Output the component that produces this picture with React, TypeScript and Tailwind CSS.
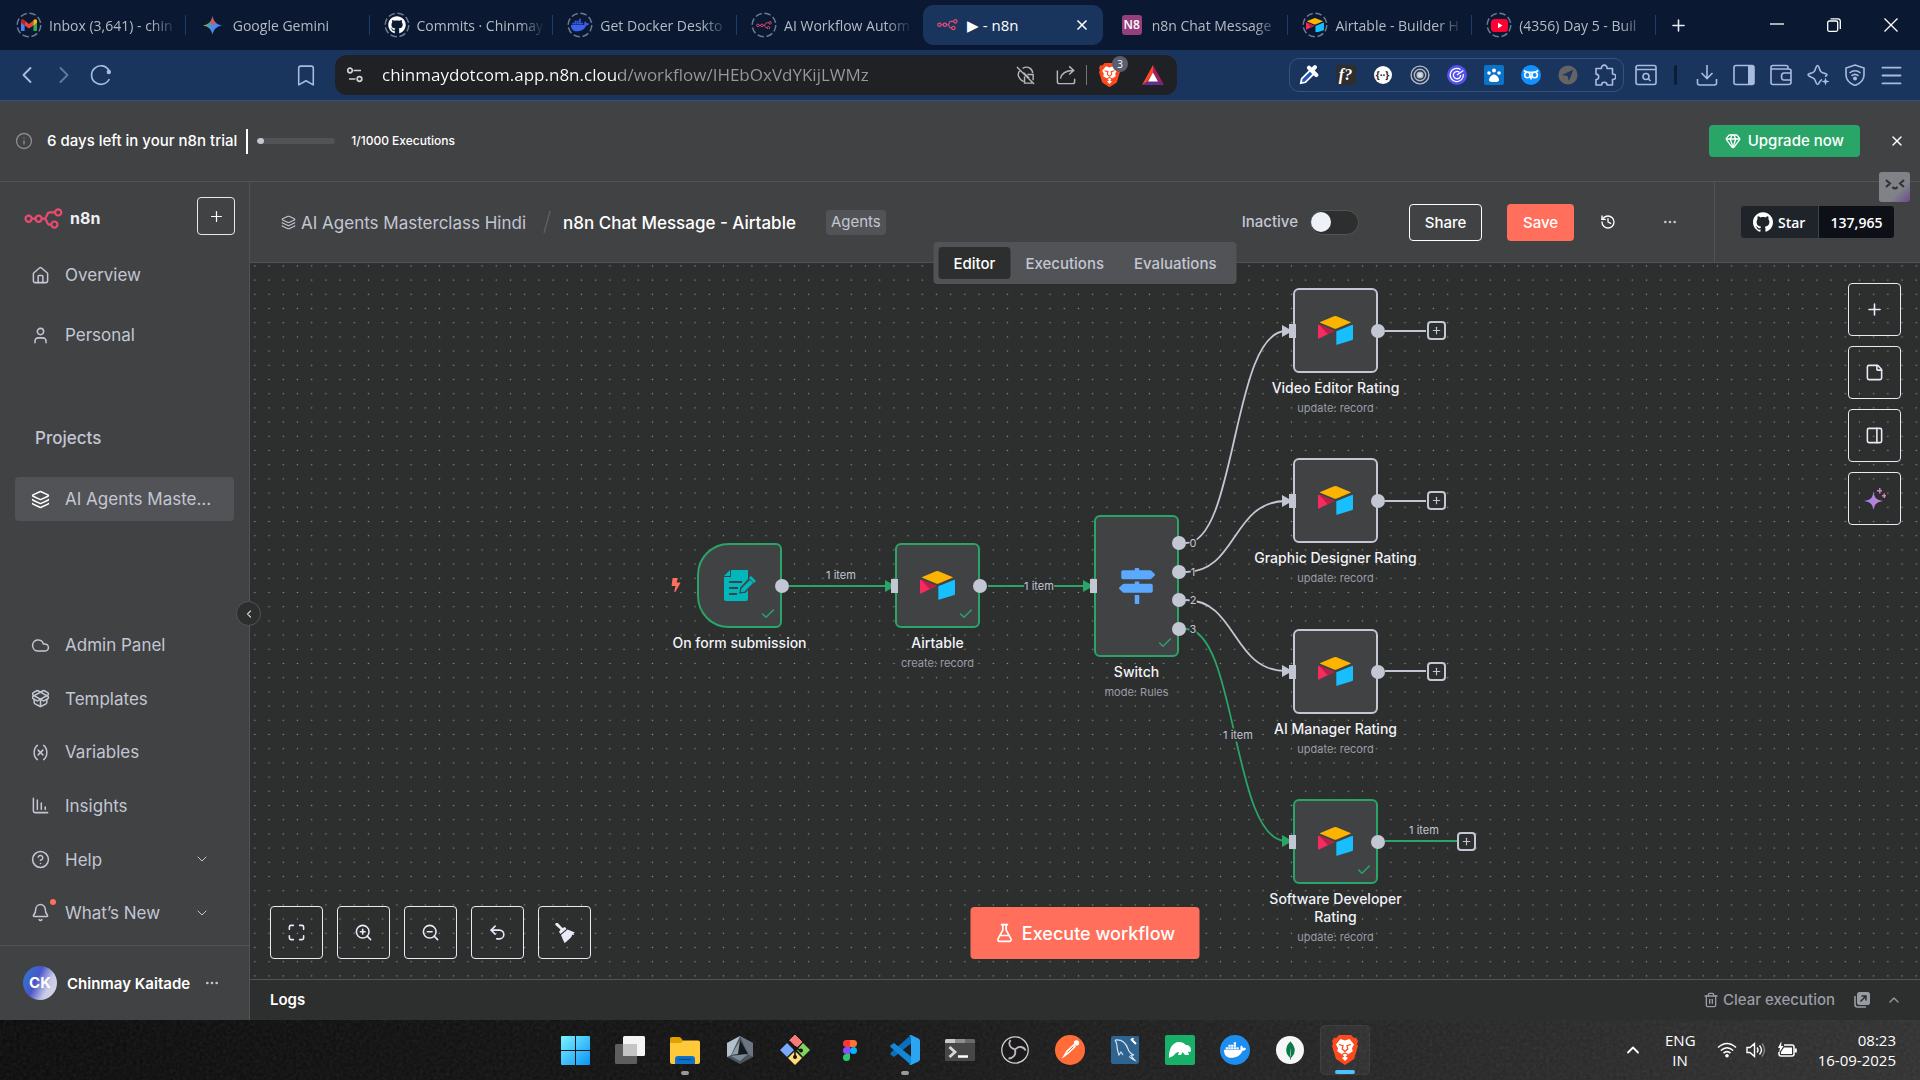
import type { ReactNode } from "react";
import {
  Bell,
  BookmarkIcon,
  ChartColumnDecreasing,
  Check,
  ChevronDown,
  ChevronLeft,
  ChevronRight,
  ChevronUp,
  CircleHelp,
  Cloud,
  Ellipsis,
  FlaskConical,
  Gem,
  History,
  House,
  Info,
  Layers,
  Maximize,
  Menu,
  PackageOpen,
  PanelRight,
  Plus,
  StickyNote,
  Trash2,
  Undo2,
  User,
  Variable,
  X,
  ZoomIn,
  ZoomOut,
} from "lucide-react";
import { FaBolt, FaDocker, FaGithub, FaMapSigns } from "react-icons/fa";
import { SiBrave, SiGithub, SiMongodb } from "react-icons/si";

const EDGE = "#c3c6d3";
const GREEN = "#29a568";

/* ---------- shared drawings ---------- */

function N8nLogo({ className }: { className: string }) {
  return (
    <svg viewBox="0 0 39 21" className={className} fill="none" stroke="#ea4b71" strokeWidth="2.2">
      <circle cx="4.6" cy="10.7" r="3.1" />
      <circle cx="14.6" cy="10.7" r="3.1" />
      <circle cx="34.2" cy="4.4" r="3.1" />
      <circle cx="30.4" cy="16.6" r="3.1" />
      <path d="M7.7 10.7h3.8M17.7 10.7h2.4c3 0 2-6.3 5.6-6.3h5.4M19.8 10.7c4 0 2 5.9 5.6 5.9h2" />
    </svg>
  );
}

function AirtableLogo({ className }: { className: string }) {
  return (
    <svg viewBox="0 0 107 88" className={className}>
      <path d="M7 18 49 1q4-1.500 8 0l42 17q2 1.500 0 3L57 38q-4 2-8 0L7 21q-2-1.500 0-3z" fill="#fcb400" />
      <path d="M56 47 105 27q2 0 2 2v41q0 2-2 3L58 88q-2 0-2-2z" fill="#18bfff" />
      <path d="M0 28q1-2 3-1l45 18q2 1 0 2L3 69q-3 1-3-1z" fill="#f82b60" />
      <path d="M3 27 48 45q2 1 0 2L30 56Z" fill="#ba1e45" />
    </svg>
  );
}

function WindowsLogo() {
  return (
    <svg viewBox="0 0 29 29" className="size-[29px]">
      <defs>
        <linearGradient id="win" x1="0" y1="0" x2="1" y2="1" gradientUnits="objectBoundingBox">
          <stop offset="0" stopColor="#7df3ff" />
          <stop offset="1" stopColor="#0a93f8" />
        </linearGradient>
      </defs>
      <path d="M0 1q0-1 1-1h13v14H0zM15 0h13q1 0 1 1v13H15zM0 15h14v14H1q-1 0-1-1zM15 15h14v13q0 1-1 1H15z" fill="url(#win)" />
    </svg>
  );
}

/* ---------- browser ---------- */

function Ring({ children }: { children: ReactNode }) {
  return (
    <span className="relative flex size-[26px] items-center justify-center">
      <svg viewBox="0 0 26 26" className="absolute inset-0 size-[26px]" fill="none" stroke="#6c7a90" strokeWidth="1.500">
        <circle cx="13" cy="13" r="11.800" strokeDasharray="6.600 2.670" />
      </svg>
      {children}
    </span>
  );
}

const tabs: { title: string; icon: ReactNode; active?: boolean }[] = [
  {
    title: "Inbox (3,641) - chin",
    icon: (
      <Ring>
        <svg viewBox="0 0 20 16" className="w-4">
          <path d="M0 2.500V14a1.500 1.500 0 0 0 1.500 1.500H4.500V6z" fill="#4285f4" />
          <path d="M20 2.500V14a1.500 1.500 0 0 1-1.500 1.500H15.500V6z" fill="#34a853" />
          <path d="M4.500 8V2l5.500 4.200L15.500 2v6L10 12z" fill="#ea4335" />
          <path d="M0 2.500C0 .4 2-.3 3.600.9L4.500 1.600V8L0 4.500z" fill="#c5221f" />
          <path d="M20 2.500C20 .4 18-.3 16.400.9l-.9.7V8L20 4.500z" fill="#fbbc04" />
        </svg>
      </Ring>
    ),
  },
  {
    title: "Google Gemini",
    icon: (
      <svg viewBox="0 0 20 20" className="size-[19px]">
        <defs>
          <linearGradient id="gem" x1="0" y1=".3" x2="1" y2=".6">
            <stop offset="0" stopColor="#fcbd00" />
            <stop offset=".3" stopColor="#50a877" />
            <stop offset=".5" stopColor="#4a8df8" />
            <stop offset="1" stopColor="#3b82f6" />
          </linearGradient>
        </defs>
        <path d="M10 0c.8 5.600 4.400 9.200 10 10-5.600.8-9.200 4.400-10 10-.8-5.600-4.400-9.200-10-10C5.600 9.200 9.200 5.600 10 0z" fill="url(#gem)" />
        <path d="M10 0c.5 3.500 2 6 4 7.600L10 10 7.500 6C9 4.600 9.700 2.500 10 0z" fill="#ef4a4a" opacity=".85" />
      </svg>
    ),
  },
  { title: "Commits · Chinmay", icon: <Ring><span className="flex size-[18px] rounded-full bg-[#0b1a33]"><FaGithub className="size-[18px] text-white" /></span></Ring> },
  { title: "Get Docker Deskto", icon: <Ring><FaDocker className="size-[18px] text-[#3a62ee]" /></Ring> },
  { title: "AI Workflow Autom", icon: <Ring><N8nLogo className="w-4" /></Ring> },
  { title: "▶ - n8n", icon: <N8nLogo className="w-[21px]" />, active: true },
  { title: "n8n Chat Message", icon: <span className="flex size-5 items-center justify-center rounded-[3px] bg-[#953f7c] text-[12px] font-semibold text-white">N8</span> },
  { title: "Airtable - Builder H", icon: <Ring><AirtableLogo className="w-[18px]" /></Ring> },
  {
    title: "(4356) Day 5 - Buil",
    icon: (
      <Ring>
        <svg viewBox="0 0 17 13" className="w-[17px]">
          <rect width="17" height="13" rx="3.500" fill="#ff0033" />
          <path d="M7 3.700v5.600l4.500-2.800z" fill="#fff" />
        </svg>
      </Ring>
    ),
  },
];

function TabStrip() {
  return (
    <div className="flex h-[50px] items-center bg-[#0a1931] pl-0.5">
      <div role="tablist" className="grid min-w-0 flex-1 grid-cols-9">
        {tabs.map((t, i) => (
          <div key={t.title} className="relative flex h-10 items-center">
            <button
              role="tab"
              aria-selected={!!t.active}
              className={
                t.active
                  ? "mx-0.5 flex h-10 w-full items-center rounded-[10px] bg-[#1a355d] pl-3 text-white"
                  : "flex h-10 w-full items-center pl-3.5 text-[#b4bac6]"
              }
            >
              <span className="flex w-[26px] shrink-0 justify-center">{t.icon}</span>
              <span
                className={
                  t.active
                    ? "ml-1.5 text-[15px] whitespace-nowrap"
                    : "ml-[7px] w-[128px] overflow-hidden [mask-image:linear-gradient(90deg,#000_80%,transparent)] text-left text-[14px] whitespace-nowrap"
                }
              >
                {t.title}
              </span>
              {t.active && <X className="mr-[13px] ml-auto size-4" strokeWidth={2.5} />}
            </button>
            {!t.active && i !== 4 && <span className="absolute top-2.5 right-0 h-5 w-px bg-[#1f3c68]" />}
          </div>
        ))}
      </div>
      <div className="flex w-[264px] items-center text-[#e8ebf0]">
        <button aria-label="New tab" className="ml-[13px]"><Plus className="size-[19px]" strokeWidth={2} /></button>
        <div className="ml-auto flex w-[150px] justify-between pr-[22px]">
          <button aria-label="Minimize"><svg viewBox="0 0 14 14" className="w-3.5"><path d="M0 6h14" stroke="#fff" strokeWidth="1.300" /></svg></button>
          <button aria-label="Restore">
            <svg viewBox="0 0 14 14" className="w-3.5" fill="none" stroke="#fff" strokeWidth="1.300"><rect x=".7" y="3" width="10" height="10.300" rx="1.500" /><path d="M3.500.9H11q2.300 0 2.300 2.300V11" /></svg>
          </button>
          <button aria-label="Close window"><svg viewBox="0 0 14 14" className="w-3.5"><path d="M.5.5l13 13M13.500.5l-13 13" stroke="#fff" strokeWidth="1.300" /></svg></button>
        </div>
      </div>
    </div>
  );
}

const line = "size-[22px]";

function IconSlot({ label, children }: { label: string; children: ReactNode }) {
  return <button aria-label={label} className="flex h-8 w-[37px] items-center justify-center">{children}</button>;
}

function Toolbar() {
  return (
    <div className="flex h-[51px] items-center border-b border-[#2f5080] bg-[#1a355d] text-[#a9bcdf]">
      <div className="flex items-center pl-2">
        <IconSlot label="Back"><ChevronLeft className="size-[28px]" strokeWidth={1.6} /></IconSlot>
        <IconSlot label="Forward"><ChevronRight className="size-[28px] opacity-50" strokeWidth={1.6} /></IconSlot>
        <IconSlot label="Reload">
          <svg viewBox="0 0 22 22" className={line} fill="none" stroke="currentColor" strokeWidth="1.600">
            <path d="M19 6.500A9.300 9.300 0 1 0 19.300 15" /><circle cx="18.800" cy="8" r="2.200" fill="currentColor" stroke="none" />
          </svg>
        </IconSlot>
      </div>
      <button aria-label="Bookmark" className="ml-[173px]"><BookmarkIcon className="h-[25px] w-7" strokeWidth={1.5} /></button>
      <div className="ml-[15px] flex h-10 w-[842px] items-center rounded-[12px] bg-[#202124] pr-[13px] pl-3">
        <svg viewBox="0 0 16 16" className="w-4" fill="none" stroke="#d0d2d6" strokeWidth="1.700">
          <circle cx="3" cy="3.500" r="2.300" /><path d="M6.500 3.500H14M2 12h6.500" /><circle cx="12.500" cy="12" r="2.300" />
        </svg>
        <input
          aria-label="Address"
          readOnly
          value="chinmaydotcom.app.n8n.cloud/workflow/IHEbOxVdYKijLWMz"
          className="ml-[19px] min-w-0 flex-1 bg-[linear-gradient(90deg,#fff_237px,#97999d_237px)] bg-clip-text text-[17px] text-transparent outline-none"
        />
        <svg viewBox="0 0 22 22" className="w-[21px]" fill="none" stroke="#b4b7bb" strokeWidth="1.500">
          <path d="M2 2l18 18M8 3.500c6-3.500 10.500 1 10.500 5M5.500 5.500C1 10 4.500 15 9 17.500M10 12v7h8M13 10h6v6M9 8l6 6" />
        </svg>
        <svg viewBox="0 0 22 22" className="ml-5 w-5" fill="none" stroke="#b4b7bb" strokeWidth="1.600">
          <path d="M1.500 6v12.500q0 2 2 2h15q2 0 2-2V15M5 15c1-6 6-9 14-9M14.500 1.500L19.500 6l-5 4.500" />
        </svg>
        <span className="ml-2.5 h-5 w-px bg-[#73757a]" />
        <span className="relative ml-3 flex h-[26px] items-center">
          <BraveIcon className="w-[21px]" />
          <span className="absolute -top-[6px] left-[13px] flex size-[16px] items-center justify-center rounded-full bg-[#5b5e6e] text-[10px] text-white">3</span>
        </span>
        <svg viewBox="0 0 22 20" className="ml-[22px] w-[22px]">
          <path d="M11 0L0 20l5-3 6-9z" fill="#ff4724" /><path d="M11 0l11 20-5-3-6-9z" fill="#9e1f63" /><path d="M0 20h22l-6-4H6z" fill="#662d91" /><path d="M11 7.500L6 16.500h10z" fill="#fff" />
        </svg>
      </div>
      <div className="ml-auto flex h-[34px] items-center rounded-[10px] border border-[#37517c]">
        <IconSlot label="Color picker">
          <svg viewBox="0 0 22 22" className="w-5"><path d="M2 20l1-5L12.500 5.500l4 4L7 19z" fill="#2456b8" stroke="#fff" strokeWidth="2" /><path d="M11 3l8 8M14 6l3.500-3.500" stroke="#fff" strokeWidth="4.500" strokeLinecap="round" /></svg>
        </IconSlot>
        <IconSlot label="Font finder"><span className="flex size-5 items-center justify-center rounded-[2px] bg-[#2e2e2e] font-['Liberation_Serif',serif] text-[16px] font-bold text-white italic">f?</span></IconSlot>
        <IconSlot label="JSON viewer"><span className="flex size-[18px] items-center justify-center rounded-full bg-white text-[10px] font-bold text-[#222]">{"{··}"}</span></IconSlot>
        <IconSlot label="Orbit">
          <svg viewBox="0 0 22 22" className="w-5" fill="none" stroke="#b6b8bd" strokeWidth="1.500"><circle cx="11" cy="11" r="9.800" /><circle cx="11" cy="11" r="6.300" /><circle cx="11" cy="11" r="3.200" fill="#d7d8da" /></svg>
        </IconSlot>
        <IconSlot label="Radar">
          <svg viewBox="0 0 22 22" className="w-5"><circle cx="11" cy="11" r="11" fill="#5452ee" /><path d="M11 11l7-5M15 5a7.300 7.300 0 1 0 3 5M13.500 8a4 4 0 1 0 1.500 3" fill="none" stroke="#fff" strokeWidth="1.400" /></svg>
        </IconSlot>
        <IconSlot label="Paws">
          <svg viewBox="0 0 20 20" className="w-5" fill="#fff"><rect width="20" height="20" rx="2" fill="#0b74c8" /><circle cx="5" cy="8" r="1.800" /><circle cx="10" cy="5.500" r="2" /><circle cx="15" cy="8" r="1.800" /><path d="M5 15c0-3 3-5.500 5-5.500s5 2.500 5 5.500c0 2-3 2-5 2s-5 0-5-2z" /></svg>
        </IconSlot>
        <IconSlot label="Owl">
          <svg viewBox="0 0 22 22" className="w-5" fill="none" stroke="#fff" strokeWidth="1.800"><circle cx="11" cy="11" r="11" fill="#1290ff" stroke="none" /><circle cx="7" cy="11" r="3" /><circle cx="15" cy="11" r="3" /><path d="M3 6l4 2h8l4-2M11 12v4" /></svg>
        </IconSlot>
        <IconSlot label="Navigator">
          <svg viewBox="0 0 22 22" className="w-5"><circle cx="11" cy="11" r="10.500" fill="#646464" /><path d="M17 5L4.500 11l6 1 1.500 5.500z" fill="#1e3761" /></svg>
        </IconSlot>
        <IconSlot label="Extensions">
          <svg viewBox="0 0 22 22" className={line} fill="none" stroke="currentColor" strokeWidth="1.600" strokeLinejoin="round">
            <path d="M2 4.500h5.500a2.800 2.800 0 1 1 5.500 0h5.500V10a2.800 2.800 0 1 1 0 5.500V21H13a2.700 2.700 0 0 0-5.400 0H2v-5.500a2.700 2.700 0 0 0 0-5.400z" />
          </svg>
        </IconSlot>
      </div>
      <div className="flex items-center pr-[10px] pl-[3px]">
        <IconSlot label="Find in page">
          <svg viewBox="0 0 22 22" className={line} fill="none" stroke="currentColor" strokeWidth="1.600"><rect x="1" y="1.500" width="20" height="19" rx="2" /><path d="M1 5.500h20M13.500 15l2 2" /><circle cx="11" cy="12.500" r="3" /></svg>
        </IconSlot>
        <span className="mr-[11px] ml-[10px] h-5 w-[3px] rounded bg-[#0d1d38]" />
        <IconSlot label="Downloads">
          <svg viewBox="0 0 22 22" className={line} fill="none" stroke="currentColor" strokeWidth="1.600"><path d="M11 1v13M5.500 9l5.500 5.500L16.500 9M1.500 15v4q0 2 2 2h15q2 0 2-2v-4" /></svg>
        </IconSlot>
        <IconSlot label="Side panel">
          <svg viewBox="0 0 22 22" className={line} fill="none" stroke="currentColor" strokeWidth="1.600"><rect x="1" y="1.500" width="20" height="19" rx="2" /><rect x="15" y="2" width="6" height="18" fill="currentColor" stroke="none" /></svg>
        </IconSlot>
        <IconSlot label="Wallet">
          <svg viewBox="0 0 22 22" className={line} fill="none" stroke="currentColor" strokeWidth="1.600"><path d="M18 5V3.500q0-2-2-2H3q-2 0-2 2v15q0 2 2 2h15q3 0 3-2v-12Q21 5 18 5H1.500M21 9h-7q-2.500 0-2.500 3.500T14 16h7" /></svg>
        </IconSlot>
        <IconSlot label="Leo">
          <svg viewBox="0 0 22 22" className={line} fill="none" stroke="currentColor" strokeWidth="1.600" strokeLinejoin="round"><path d="M15 15.500c-2.500 1-2.800 5-4.500 5s-1.500-4-3.500-5.800S1 12.500 1 10.800s4-1 6-3 1.800-6.300 3.500-6.300 1.500 4.300 3.500 6.300 6 1.300 6 3c0 .8-1 1.200-2 1.600" /><path d="M18.500 13.500l1 3 3 1-3 1-1 3-1-3-3-1 3-1z" fill="currentColor" stroke="none" /></svg>
        </IconSlot>
        <IconSlot label="VPN">
          <svg viewBox="0 0 22 22" className={line} fill="none" stroke="currentColor" strokeWidth="1.600"><path d="M11 1l9 3v7c0 5-4 8.500-9 10.500C6 19.500 2 16 2 11V4zM5.500 9q5.500-4.500 11 0M7.500 11.800q3.500-2.800 7 0" /><circle cx="11" cy="14.500" r="1.200" fill="currentColor" /></svg>
        </IconSlot>
        <IconSlot label="Menu"><Menu className="size-[27px]" strokeWidth={1.6} /></IconSlot>
      </div>
    </div>
  );
}

/* ---------- n8n ---------- */

function TrialBanner() {
  return (
    <div className="flex h-[81px] items-center border-b border-[#525356] bg-[#414244] pr-[15px] pl-[15px] text-white">
      <Info className="size-[18px] text-[#8b8c90]" strokeWidth={1.8} />
      <p className="ml-[14px] text-[15px] font-medium">6 days left in your n8n trial</p>
      <span className="ml-[9px] h-[25px] w-0.5 bg-white" />
      <progress
        aria-label="Executions used"
        max={1000}
        value={90}
        className="ml-[9px] h-1.5 w-[78px] appearance-none overflow-hidden rounded-full [&::-webkit-progress-bar]:bg-[#525356] [&::-webkit-progress-value]:rounded-full [&::-webkit-progress-value]:bg-[#c3c6d3]"
      />
      <span className="ml-4 text-[12px] font-medium">1/1000 Executions</span>
      <button className="ml-auto flex h-8 items-center rounded-[4px] bg-[#29a568] px-4 text-[15px] font-medium">
        <Gem className="mr-[7px] size-4" />
        Upgrade now
      </button>
      <button aria-label="Dismiss" className="ml-[29px]"><X className="size-4" strokeWidth={2} /></button>
    </div>
  );
}

function NavItem({ icon: Icon, label, active, chevron, dot }: { icon: typeof House; label: string; active?: boolean; chevron?: boolean; dot?: boolean }) {
  return (
    <a
      href="#"
      className={
        active
          ? "flex h-11 items-center rounded-[4px] bg-[#525356] pr-[18px] pl-4"
          : "flex h-11 items-center rounded-[4px] pr-6 pl-4"
      }
    >
      <span className="relative">
        <Icon className={active ? "size-[19px] text-white" : "size-[19px]"} strokeWidth={1.9} />
        {dot && <span className="absolute -top-1 -right-1.5 size-1.5 rounded-full bg-[#ff6f5c]" />}
      </span>
      <span className="ml-[15px] truncate pt-0.5 text-[17px]">{label}</span>
      {chevron && <ChevronDown className="ml-auto size-4" strokeWidth={1.5} />}
    </a>
  );
}

function Sidebar() {
  return (
    <aside className="relative flex w-[250px] shrink-0 flex-col border-r border-[#525356] bg-[#414244] text-[#c3c6d3]">
      <div className="flex items-center pt-[15px] pr-[14px] pl-6">
        <N8nLogo className="mt-1 w-[39px]" />
        <span className="mt-1 ml-[7px] text-[16px] font-bold text-[#eceef5]">n8n</span>
        <button aria-label="Create" className="ml-auto flex size-[38px] items-center justify-center rounded-[4px] border border-[#e6e8f0] text-white">
          <Plus className="size-[17px]" strokeWidth={1.7} />
        </button>
      </div>
      <nav className="mt-[18px] flex flex-col gap-4 px-[15px]">
        <NavItem icon={House} label="Overview" />
        <NavItem icon={User} label="Personal" />
      </nav>
      <h2 className="mt-[69px] pl-[35px] text-[17px] leading-6 font-medium">Projects</h2>
      <nav className="mt-[27px] px-[15px]">
        <NavItem icon={Layers} label="AI Agents Masterclass Hindi" active />
      </nav>
      <nav className="mt-auto mb-[10px] flex h-[312px] flex-col justify-between px-[15px]">
        <NavItem icon={Cloud} label="Admin Panel" />
        <NavItem icon={PackageOpen} label="Templates" />
        <NavItem icon={Variable} label="Variables" />
        <NavItem icon={ChartColumnDecreasing} label="Insights" />
        <NavItem icon={CircleHelp} label="Help" chevron />
        <NavItem icon={Bell} label="What’s New" chevron dot />
      </nav>
      <div className="flex h-[75px] items-center border-t border-[#525356] pl-[23px]">
        <span className="flex size-[34px] items-center justify-center rounded-full bg-[linear-gradient(115deg,#2a7fd0_0%,#4a55c8_40%,#c9cbe6_70%,#d9dbe8_100%)] text-[15px] font-bold text-white">CK</span>
        <span className="ml-[10px] pt-0.5 text-[15px] font-semibold text-white">Chinmay Kaitade</span>
        <button aria-label="Account menu" className="ml-[14px]"><Ellipsis className="size-4" /></button>
      </div>
      <button aria-label="Collapse sidebar" className="absolute top-[419px] -right-[12px] z-10 flex size-[25px] items-center justify-center rounded-full border border-[#525356] bg-[#2d2e2e]">
        <ChevronLeft className="size-3" strokeWidth={2.5} />
      </button>
    </aside>
  );
}

function EditorHeader() {
  return (
    <header className="relative z-10 flex h-[81px] items-center border-b border-[#525356] bg-[#414244] text-[#c3c6d3]">
      <Layers className="ml-[31px] size-[15px]" strokeWidth={1.8} />
      <a href="#" className="ml-[5px] pt-[3px] text-[17px]">AI Agents Masterclass Hindi</a>
      <svg viewBox="0 0 8 22" className="ml-[17px] h-[22px] w-2"><path d="M7 0L1 22" stroke="#5c5e62" strokeWidth="1.500" /></svg>
      <h1 className="ml-[12px] pt-[3px] text-[17px] font-medium text-white">n8n Chat Message - Airtable</h1>
      <span className="ml-[30px] flex h-[25px] items-center rounded-[4px] bg-[#525356] px-[5px] text-[15px]">Agents</span>
      <label className="ml-auto flex items-center text-[15px] font-medium">
        Inactive
        <input type="checkbox" role="switch" className="peer sr-only" />
        <span className="ml-3 flex h-[25px] w-[49px] items-center rounded-full border border-[#525356] bg-[#2d2e2e]">
          <span className="size-5 rounded-full bg-[#eff1f8]" />
        </span>
      </label>
      <button className="ml-[50px] h-[37px] w-[73px] rounded-[4px] border border-white pt-0.5 text-[15px] font-medium text-white">Share</button>
      <button className="ml-[25px] h-[37px] w-[67px] rounded-[4px] bg-[#ff6f5c] pt-0.5 text-[15px] font-medium text-white">Save</button>
      <button aria-label="History" className="ml-[26px] text-white"><History className="size-4" strokeWidth={2} /></button>
      <button aria-label="More" className="ml-[46px]"><Ellipsis className="size-4" /></button>
      <div className="ml-[36px] flex h-full w-[206px] items-center border-l border-[#525356] pl-[26px] font-['Open_Sans',sans-serif] text-[15px] font-semibold text-white">
        <a href="#" className="flex h-8 w-[77px] items-center rounded-l-[3px] bg-[#1f242b] pl-3">
          <SiGithub className="mr-[5px] size-5" />
          <span className="text-[14px]">Star</span>
        </a>
        <a href="#" className="flex h-8 w-[76px] items-center justify-center rounded-r-[3px] border-l border-[#3d444d] bg-[#0d1117] text-[14px]">137,965</a>
      </div>
      <div className="absolute top-[60px] left-1/2 flex h-[42px] -translate-x-1/2 items-center rounded-[4px] bg-[#525356] p-[5px] text-[15px] font-medium">
        <button className="h-8 rounded-[4px] bg-[#2d2e2e] px-[15px] pt-0.5 text-white">Editor</button>
        <button className="h-8 px-[15px] pt-0.5">Executions</button>
        <button className="h-8 px-[15px] pt-0.5">Evaluations</button>
      </div>
      <div className="absolute -top-[10px] right-[10px] flex h-[30px] w-[31px] items-center justify-center rounded-[3px] bg-[linear-gradient(135deg,#808287_0%,#808287_65%,#6a4a94_100%)]">
        <svg viewBox="0 0 20 12" className="-mt-1 w-5" fill="none" stroke="#2d3036" strokeWidth="2"><path d="M1 1l4 3.500L1 8M19 1l-4 3.500L19 8M7.500 8q2.500 3 5 0" /></svg>
      </div>
    </header>
  );
}

const straight = [
  { d: "M539 323H636", color: GREEN },
  { d: "M738 323H835", color: GREEN },
  { d: "M1135 68H1176", color: EDGE },
  { d: "M1135 238H1176", color: EDGE },
  { d: "M1135 408H1176", color: EDGE },
  { d: "M1135 578H1207", color: GREEN },
];
const curves = [
  { d: "M936 280C987 280 982 68 1036 68", color: EDGE },
  { d: "M936 309C987 309 982 238 1036 238", color: EDGE },
  { d: "M936 337C987 337 982 408 1036 408", color: EDGE },
  { d: "M936 366C987 366 982 578 1036 578", color: GREEN },
];
const arrows = [
  { x: 636, y: 323, color: GREEN },
  { x: 834, y: 323, color: GREEN },
  { x: 1033, y: 68, color: EDGE },
  { x: 1033, y: 238, color: EDGE },
  { x: 1033, y: 408, color: EDGE },
  { x: 1033, y: 578, color: GREEN },
];

function Edges() {
  return (
    <svg className="absolute inset-0 h-full w-full" fill="none">
      <defs>
        <pattern id="dots" width="14.200" height="14.200" x="-2.200" y="-4.200" patternUnits="userSpaceOnUse">
          <circle cx="7.100" cy="7.100" r=".75" fill="#8b8c8e" />
        </pattern>
      </defs>
      <rect width="100%" height="100%" fill="url(#dots)" />
      {[...straight, ...curves].map((e) => <path key={e.d} d={e.d} stroke={e.color} strokeWidth="1.800" />)}
      {arrows.map((a) => (
        <path key={`${a.x}-${a.y}`} transform={`translate(${a.x} ${a.y})`} d="M-1-6L7-1.500V1.500L-1 6Z" fill={a.color} />
      ))}
    </svg>
  );
}

const airtable = <AirtableLogo className="w-[35px]" />;
const formIcon = (
  <svg viewBox="0 0 32 31" className="w-8">
    <path d="M7 0h17v9l-8 9v5h5l3-3v9q0 2-2 2H2q-2 0-2-2V7h7z" fill="#00b7bc" />
    <path d="M6 0v6H0z" fill="#00b7bc" />
    <path d="M5 12h13M5 18h9M5 24h8" stroke="#414244" strokeWidth="1.800" />
    <path d="M17 18l9-9 4 4-9 9-5 1z" fill="#00b7bc" stroke="#414244" strokeWidth="1.200" />
    <path d="M26 7l5 5" stroke="#00b7bc" strokeWidth="3" />
  </svg>
);

type FlowNode = {
  title: string;
  sub?: string;
  place: string;
  box: string;
  icon: ReactNode;
  done?: boolean;
  input: boolean;
  outputs: string[];
};

const oneOut = ["top-[34px]"];
const square = "h-[85px] rounded-[6px]";
const nodes: FlowNode[] = [
  { title: "On form submission", place: "left-[447px] top-[280px]", box: "h-[85px] rounded-l-[32px] rounded-r-[6px]", icon: formIcon, done: true, input: false, outputs: oneOut },
  { title: "Airtable", sub: "create: record", place: "left-[645px] top-[280px]", box: square, icon: airtable, done: true, input: true, outputs: oneOut },
  { title: "Switch", sub: "mode: Rules", place: "left-[844px] top-[252px]", box: "h-[142px] rounded-[6px]", icon: <FaMapSigns className="size-9 text-[#5ba9ff]" />, done: true, input: true, outputs: ["top-[19px]", "top-[48px]", "top-[76px]", "top-[105px]"] },
  { title: "Video Editor Rating", sub: "update: record", place: "left-[1043px] top-[25px]", box: square, icon: airtable, input: true, outputs: oneOut },
  { title: "Graphic Designer Rating", sub: "update: record", place: "left-[1043px] top-[195px]", box: square, icon: airtable, input: true, outputs: oneOut },
  { title: "AI Manager Rating", sub: "update: record", place: "left-[1043px] top-[366px]", box: square, icon: airtable, input: true, outputs: oneOut },
  { title: "Software Developer Rating", sub: "update: record", place: "left-[1043px] top-[536px]", box: square, icon: airtable, done: true, input: true, outputs: oneOut },
];

function NodeCard({ node }: { node: FlowNode }) {
  return (
    <div className={`absolute flex w-[85px] flex-col items-center ${node.place}`}>
      <div className={`relative flex w-[85px] items-center justify-center border-2 bg-[#414244] ${node.box} ${node.done ? "border-[#29a568]" : "border-[#c3c6d3]"}`}>
        {node.icon}
        {node.done && <Check className="absolute right-1 bottom-1 size-4 text-[#29a568]" strokeWidth={2.2} />}
        {node.input && <span className="absolute top-1/2 -left-[6px] h-3.5 w-[7px] -translate-y-1/2 bg-[#c3c6d3]" />}
        {node.outputs.map((o) => (
          <span key={o} className={`absolute -right-[9px] size-3.5 rounded-full bg-[#c3c6d3] ${o}`} />
        ))}
      </div>
      <div className="mt-[6px] w-[170px] text-center text-[14px] leading-[18px] font-medium text-[#f2f3f8]">{node.title}</div>
      {node.sub && <div className="mt-0.5 text-[11px] leading-[18px] whitespace-nowrap text-[#9a9ca5]">{node.sub}</div>}
    </div>
  );
}

const edgeLabels = [
  { text: "1 item", place: "left-[591px] top-[312px]", bg: false },
  { text: "1 item", place: "left-[789px] top-[323px]", bg: true },
  { text: "1 item", place: "left-[988px] top-[472px]", bg: true },
  { text: "1 item", place: "left-[1174px] top-[567px]", bg: false },
  { text: "0", place: "left-[943px] top-[280px]", bg: true },
  { text: "1", place: "left-[943px] top-[309px]", bg: true },
  { text: "2", place: "left-[943px] top-[337px]", bg: true },
  { text: "3", place: "left-[943px] top-[366px]", bg: true },
];
const addButtons = ["left-[1177px] top-[58px]", "left-[1177px] top-[228px]", "left-[1177px] top-[399px]", "left-[1207px] top-[569px]"];

function SquareButton({ label, children }: { label: string; children: ReactNode }) {
  return (
    <button aria-label={label} className="flex size-[53px] items-center justify-center rounded-[4px] border border-[#e8eaf6] text-[#e8eaf6]">
      {children}
    </button>
  );
}

function Canvas() {
  return (
    <div className="relative min-h-0 flex-1 overflow-hidden bg-[#2d2e2e]">
      <Edges />
      {edgeLabels.map((l) => (
        <span key={l.place} className={`absolute -translate-x-1/2 -translate-y-1/2 text-[11px] leading-[13px] whitespace-nowrap text-[#c3c6d3] ${l.place} ${l.bg ? "bg-[#2d2e2e]" : ""}`}>
          {l.text}
        </span>
      ))}
      {nodes.map((n) => <NodeCard key={n.title} node={n} />)}
      {addButtons.map((p) => (
        <button key={p} aria-label="Add node" className={`absolute flex size-[19px] items-center justify-center rounded-[4px] border-2 border-[#c3c6d3] bg-[#2d2e2e] text-[#c3c6d3] ${p}`}>
          <Plus className="size-[11px]" strokeWidth={2.5} />
        </button>
      ))}
      <FaBolt className="absolute top-[315px] left-[419px] size-3.5 text-[#ff6f5c]" />
      <div className="absolute top-5 right-[19px] flex flex-col gap-[10px]">
        <SquareButton label="Add node"><Plus className="size-[19px]" strokeWidth={2} /></SquareButton>
        <SquareButton label="Add sticky note"><StickyNote className="size-[19px]" strokeWidth={2} /></SquareButton>
        <SquareButton label="Open panel"><PanelRight className="size-[19px]" strokeWidth={2} /></SquareButton>
        <SquareButton label="Assistant">
          <svg viewBox="0 0 22 22" className="w-[22px]">
            <defs>
              <linearGradient id="spark" x1="0" y1="0" x2="1" y2="0"><stop offset="0" stopColor="#8d84ff" /><stop offset="1" stopColor="#e77fb4" /></linearGradient>
            </defs>
            <path d="M9.500 4c1 6 3 8 9.500 9-6.500 1-8.500 3-9.500 9-1-6-3-8-9.500-9 6.500-1 8.500-3 9.500-9zM15 0h1.500v2H18v1.500h-1.500v2H15v-2h-2V2h2zM19.500 5.500H21V7h1v1.500h-1V10h-1.500V8.500H18V7h1.500z" fill="url(#spark)" />
          </svg>
        </SquareButton>
      </div>
      <div className="absolute bottom-5 left-5 flex gap-[14px]">
        <SquareButton label="Fit view"><Maximize className="size-[19px]" strokeWidth={2} /></SquareButton>
        <SquareButton label="Zoom in"><ZoomIn className="size-[19px]" strokeWidth={2} /></SquareButton>
        <SquareButton label="Zoom out"><ZoomOut className="size-[19px]" strokeWidth={2} /></SquareButton>
        <SquareButton label="Undo"><Undo2 className="size-[19px]" strokeWidth={2} /></SquareButton>
        <SquareButton label="Tidy up">
          <svg viewBox="0 0 20 20" className="w-5" fill="currentColor"><path d="M1 0q1-.8 2 .3L7.500 5 10 4l1.500 2-6 5L4 9l1.500-2.500L.4 2Q0 .8 1 0zM12.500 6.500L20 9.500l-1.500.8.700 1.700-2-.3-1 2.500-6.500 6-1.500-3L6 12z" /></svg>
        </SquareButton>
      </div>
      <button className="absolute bottom-5 left-1/2 flex h-[52px] w-[229px] -translate-x-1/2 items-center justify-center rounded-[4px] bg-[#ff6f5c] text-[18px] font-medium text-white">
        <FlaskConical className="mr-[7px] size-5" strokeWidth={2} />
        Execute workflow
      </button>
    </div>
  );
}

function LogsBar() {
  return (
    <footer className="flex h-[41px] items-center border-t border-[#525356] bg-[#2d2e2e] pr-[18px] pl-5 text-[#9a9ca5]">
      <h2 className="text-[15px] font-semibold text-white">Logs</h2>
      <button className="ml-auto flex items-center text-[15px] font-medium">
        <Trash2 className="mr-1 size-4" strokeWidth={2} />
        Clear execution
      </button>
      <button aria-label="Pop out" className="ml-[19px]">
        <svg viewBox="0 0 16 16" className="w-4"><rect x="3" width="13" height="13" rx="2.500" fill="currentColor" /><path d="M1 4v8.500Q1 15 3.500 15H12" fill="none" stroke="currentColor" strokeWidth="1.600" /><path d="M6.500 9.500l5-5M7.500 4h4.500v4.500" fill="none" stroke="#2d2e2e" strokeWidth="1.500" /></svg>
      </button>
      <button aria-label="Expand logs" className="ml-4"><ChevronUp className="size-4" strokeWidth={2} /></button>
    </footer>
  );
}

/* ---------- taskbar ---------- */

function BraveIcon({ className }: { className: string }) {
  return (
    <svg viewBox="0 0 26 30" className={className}>
      <path d="M7 0h12l3 3 2-.5L26 6l-1 3 1 2-4 13-9 6-9-6L0 11l1-2-1-3 2-3.500L4 3z" fill="#fb4a1e" />
      <path d="M13 5.500L17.500 4 22 9.500l-2 3.800.8 3-4.300 2.700L13 22l-3.500-3-4.300-2.700.8-3L4 9.500 8.500 4z" fill="#fff" />
      <path d="M13 21l3 2-3 3-3-3z" fill="#fff" />
      <path d="M7 9.500l4 1.200-.8 3.300 2.800 2.500 2.800-2.500-.8-3.300 4-1.200M10 19.500l3-1.500 3 1.500" fill="none" stroke="#fb4a1e" strokeWidth="1.300" />
    </svg>
  );
}

const apps: { name: string; icon: ReactNode; mark?: string; active?: boolean }[] = [
  { name: "Start", icon: <WindowsLogo /> },
  {
    name: "Task view",
    icon: (
      <svg viewBox="0 0 30 28" className="w-[30px]"><rect x="8" width="22" height="20" rx="1.500" fill="#f4f4f4" /><rect y="8" width="22" height="20" rx="1.500" fill="#6a6a6a" opacity=".85" /><path d="M8 8h14v12H8z" fill="#c4c4c4" /></svg>
    ),
  },
  {
    name: "File Explorer",
    mark: "w-2 bg-[#9a9a9a]",
    icon: (
      <svg viewBox="0 0 30 27" className="w-[30px]"><path d="M0 2q0-2 2-2h7q1.500 0 2.500 1.500L13 4h15q2 0 2 2v5H0z" fill="#e0a000" /><path d="M0 6h11l2-2.500h15q2 0 2 2V25q0 2-2 2H2q-2 0-2-2z" fill="#ffc93a" /><path d="M5 27v-5q0-3 3-3h14q3 0 3 3v5z" fill="#0e72c8" /><path d="M8.500 22.500h13" stroke="#0a4c94" strokeWidth="1.300" /></svg>
    ),
  },
  {
    name: "Prism",
    icon: (
      <svg viewBox="0 0 26 28" className="w-[26px]"><path d="M13 0l13 7v14l-13 7L0 21V7z" fill="#4b545f" /><path d="M13 0L0 7v14l4-2z" fill="#b4c0cb" /><path d="M13 0l13 7v14l-5-3z" fill="#6b7682" /><path d="M13 4l8 14-15 1z" fill="#15181d" /><path d="M13 4l-8.500 15L11 18z" fill="#8f9ba7" /><path d="M4 20l17-2-8 7z" fill="#7d8995" /></svg>
    ),
  },
  {
    name: "Git",
    icon: (
      <svg viewBox="0 0 30 30" className="w-[30px]">
        <path d="M15 0l7 7-6 6-7-7z" fill="#f77a7a" stroke="#f77a7a" /><path d="M23 8l7 7-7 7-6-7z" fill="#84d35a" /><path d="M7 8l7 7-7 7-7-7z" fill="#79aaff" /><path d="M15 16l7 7-7 7-7-7z" fill="#ffdd75" />
        <path d="M9 6l6 6v10M15 12l6 4" fill="none" stroke="#141414" strokeWidth="1.600" /><circle cx="15" cy="13" r="2" fill="#141414" /><circle cx="15" cy="22" r="2" fill="#141414" /><circle cx="21" cy="15.500" r="2" fill="#141414" />
      </svg>
    ),
  },
  {
    name: "Figma",
    icon: (
      <span className="flex size-[30px] items-center justify-center rounded-[4px] bg-[#1c1c1c]">
        <svg viewBox="0 0 14 21" className="w-3.5"><path d="M3.500 0H7v7H3.500a3.500 3.500 0 0 1 0-7z" fill="#ff3737" /><path d="M7 0h3.500a3.500 3.500 0 0 1 0 7H7z" fill="#ff7237" /><path d="M3.500 7H7v7H3.500a3.500 3.500 0 0 1 0-7z" fill="#874fff" /><circle cx="10.500" cy="10.500" r="3.500" fill="#00b6ff" /><path d="M3.500 14H7v3.500A3.500 3.500 0 1 1 3.500 14z" fill="#24cb71" /></svg>
      </span>
    ),
  },
  {
    name: "Visual Studio Code",
    mark: "w-2 bg-[#9a9a9a]",
    icon: (
      <svg viewBox="0 0 30 30" className="w-[30px]"><path d="M21 0v8.500L4 22 1 20q-1.500-1.200 0-2.500z" fill="#0a70bd" /><path d="M21 30v-8.500L4 8 1 10q-1.500 1.200 0 2.500z" fill="#1288d6" /><path d="M21 0l7.500 3.500Q30 4.200 30 6v18q0 1.800-1.500 2.500L21 30q-1 0-2-1 2 .5 2-1.500v-25q0-2-2-1.500 1-1 2-1z" fill="#2ba5f2" /></svg>
    ),
  },
  {
    name: "Terminal",
    icon: (
      <svg viewBox="0 0 30 22" className="w-[30px]"><rect width="30" height="22" rx="1.500" fill="#474747" /><path d="M0 1.500Q0 0 1.500 0H10v4H0z" fill="#c9c9c9" /><path d="M10 0h10v4H10z" fill="#8e8e8e" /><path d="M20 0h8.500Q30 0 30 1.500V4H20z" fill="#6a6a6a" /><path d="M4.500 8l5.500 5-5.500 5" fill="none" stroke="#d8d8d8" strokeWidth="2.800" /><path d="M13 17.500h10" stroke="#fff" strokeWidth="2.500" /></svg>
    ),
  },
  {
    name: "OBS Studio",
    icon: (
      <svg viewBox="0 0 28 28" className="w-7"><circle cx="14" cy="14" r="13.200" fill="#1c1a1c" stroke="#cfcfcf" strokeWidth="1.300" /><g fill="none" stroke="#bdbdbd" strokeWidth="1.800"><path d="M14 13.500C8.500 12 7 7.500 9.500 4" /><path d="M14 13.500c4-4 9-3 10.500 1" /><path d="M14 13.500c1.500 5.500-2 9-6.500 9" /></g></svg>
    ),
  },
  {
    name: "Postman",
    icon: (
      <svg viewBox="0 0 30 30" className="w-[30px]"><circle cx="15" cy="15" r="15" fill="#ff6c37" /><circle cx="21.500" cy="8" r="2.700" fill="#fff" /><path d="M6.500 24l5-8.500L18.500 9l2.500 2.800-7.500 7z" fill="#fff" /><path d="M12.500 17.500l6-6" stroke="#ff6c37" /></svg>
    ),
  },
  {
    name: "MySQL Workbench",
    icon: (
      <svg viewBox="0 0 28 28" className="w-7"><rect width="28" height="28" rx="2" fill="#2f6390" /><path d="M4 4c7-1 11 3 13 9 1 3 3 5 6 6l-3 .5 4 5c-3-1-4-3-6-4M4 4c1 2 2 3 2 6s1 6 2 9l2-3 2 3" fill="none" stroke="#d5e3ee" strokeWidth="1.200" /><path d="M20 3l5 5M22 2l-1 3" stroke="#fff" strokeWidth="2" /></svg>
    ),
  },
  {
    name: "Polar bear",
    icon: (
      <svg viewBox="0 0 30 30" className="w-[30px]"><rect width="30" height="30" rx="2" fill="#18b066" /><path d="M4 23c-.5-8 3-16 10-16 3 0 5 1 7 3 3 0 5 2 5 5 0 2-1 2-2 2l-1-.5 1 3.500h-4l-2.500-3-1.500 3h-3l1-3c-2.500 0-3 1-4.500 2.500C8 22 6.500 21 4 23z" fill="#fff" /></svg>
    ),
  },
  { name: "Docker Desktop", icon: <span className="flex size-[30px] items-center justify-center rounded-full bg-[#1d8df0]"><FaDocker className="size-[22px] text-white" /></span> },
  { name: "MongoDB Compass", icon: <span className="flex size-7 items-center justify-center rounded-full bg-[#f6f6f6]"><SiMongodb className="size-[19px] text-[#0a7a4a]" /></span> },
  { name: "Brave", icon: <BraveIcon className="w-[26px]" />, mark: "w-5 bg-[#4cc2ff]", active: true },
];

function Taskbar() {
  return (
    <div className="relative flex h-[60px] items-center justify-center bg-[linear-gradient(90deg,#0a0a0a_0%,#121212_40%,#232323_70%,#303030_100%)] font-['Open_Sans',sans-serif] text-white">
      <svg className="absolute inset-0 h-full w-full opacity-10">
        <filter id="grain"><feTurbulence type="fractalNoise" baseFrequency=".3" numOctaves="2" /><feColorMatrix type="saturate" values="0" /></filter>
        <rect width="100%" height="100%" filter="url(#grain)" />
      </svg>
      <div className="relative flex gap-[5px]">
        {apps.map((a) => (
          <button
            key={a.name}
            aria-label={a.name}
            className={
              a.active
                ? "relative flex size-[50px] items-center justify-center rounded-[5px] border border-white/5 bg-white/5"
                : "relative flex size-[50px] items-center justify-center"
            }
          >
            {a.icon}
            {a.mark && <span className={`absolute bottom-0 left-1/2 h-1 -translate-x-1/2 rounded-full ${a.mark}`} />}
          </button>
        ))}
      </div>
      <div className="absolute inset-y-0 right-6 flex items-center text-[15px] leading-5">
        <ChevronUp className="size-5" strokeWidth={2.2} />
        <div className="ml-[22px] w-[30px] text-center">ENG<br />IN</div>
        <svg viewBox="0 0 20 16" className="ml-[22px] w-5" fill="none" stroke="#fff" strokeWidth="1.600">
          <path d="M1 5.500q9-8 18 0M3.800 8.500q6.200-5.500 12.400 0M6.500 11.200q3.500-3 7 0" /><circle cx="10" cy="13.800" r="1.800" fill="#fff" stroke="none" />
        </svg>
        <svg viewBox="0 0 20 16" className="ml-[9px] w-5" fill="none" stroke="#fff" strokeWidth="1.400">
          <path d="M1 5.500h3L8.500 1.500v13L4 10.500H1zM11 5.500q2 2.500 0 5M13.500 3.500q4 4.500 0 9" /><path d="M16 1.500q5 6.500 0 13" opacity=".4" />
        </svg>
        <svg viewBox="0 0 20 16" className="ml-[11px] w-5" fill="none" stroke="#fff" strokeWidth="1.500">
          <path d="M7 3h8q2 0 2 2v7q0 2-2 2H4q-2 0-2-2v-2" /><path d="M7 5.500h8v6.500H4V10z" fill="#fff" stroke="none" /><path d="M4.500-1L1 6h2L2 11l4.500-7H4.200z" fill="#fff" stroke="none" /><path d="M18.800 6.500v4" strokeWidth="2" />
        </svg>
        <time className="ml-[20px] w-[79px] text-right whitespace-nowrap">08:23<br />16-09-2025</time>
      </div>
    </div>
  );
}

export default function App() {
  return (
    <div className="flex h-screen flex-col overflow-hidden font-['Inter',sans-serif]">
      <div className="font-['Open_Sans',sans-serif]">
        <TabStrip />
        <Toolbar />
      </div>
      <TrialBanner />
      <div className="flex min-h-0 flex-1">
        <Sidebar />
        <main className="flex min-w-0 flex-1 flex-col">
          <EditorHeader />
          <Canvas />
          <LogsBar />
        </main>
      </div>
      <Taskbar />
    </div>
  );
}
